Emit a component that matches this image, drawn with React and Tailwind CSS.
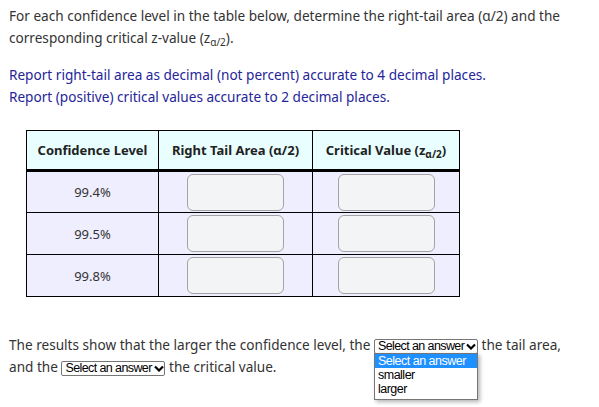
import React from 'react';

const rows = ['99.4%', '99.5%', '99.8%'];

function Chevron() {
    return (
        <svg width="10" height="7" viewBox="0 0 10 7" className="ml-[2px] shrink-0">
            <polyline points="1,1.5 5,5.5 9,1.5" fill="none" stroke="#000" strokeWidth="2.2" />
        </svg>
    );
}

function FakeSelect({ open }) {
    return (
        <span className="relative inline-flex align-middle">
            <span className="flex h-[15px] w-[104px] items-center whitespace-nowrap rounded-[2px] border border-[#767676] bg-white pl-[3px] font-['Liberation_Sans',Arial,sans-serif] text-[12.5px] leading-none tracking-[-0.6px] text-black">
                Select an answer
                <Chevron />
            </span>
            {open && (
                <span className="absolute left-0 top-[14px] z-10 block w-[104px] whitespace-nowrap border border-[#767676] bg-white pb-[3px] font-['Liberation_Sans',Arial,sans-serif] text-[12.5px] leading-[14px] tracking-[-0.5px] text-black shadow-[2px_2px_4px_rgba(0,0,0,0.3)]">
                    <span className="block bg-[#1e90ff] px-[3px] text-white">Select an answer</span>
                    <span className="block px-[3px]">smaller</span>
                    <span className="block px-[3px]">larger</span>
                </span>
            )}
        </span>
    );
}

export default function App() {
    return (
        <div className="min-h-[407px] bg-white pl-[9px] pt-[5px] font-['Noto_Sans',sans-serif] text-[13.6px] leading-[22px] text-[#333]">
            <p>
                For each confidence level in the table below, determine the right-tail area (α/2) and the
                <br />
                corresponding critical z-value (z<sub className="text-[10px]">α/2</sub>).
            </p>

            <p className="mt-[15px] text-[#25259a]">
                Report right-tail area as decimal (not percent) accurate to 4 decimal places.
                <br />
                Report (positive) critical values accurate to 2 decimal places.
            </p>

            <table className="ml-[17px] mt-[22px] border-collapse text-center">
                <thead>
                    <tr className="h-[40px] bg-[#e9ffff]">
                        <th className="w-[132px] border border-b-[3px] border-black px-1 text-[13px] font-bold text-[#222]">
                            Confidence Level
                        </th>
                        <th className="w-[154px] border border-b-[3px] border-black px-1 text-[13px] font-bold text-[#222]">
                            Right Tail Area (α/2)
                        </th>
                        <th className="w-[147px] border border-b-[3px] border-black px-1 text-[13px] font-bold text-[#222]">
                            Critical Value (z<sub className="text-[10px]">α/2</sub>)
                        </th>
                    </tr>
                </thead>
                <tbody>
                    {rows.map((r) => (
                        <tr key={r} className="h-[42px] bg-[#efeefe]">
                            <td className="border border-black text-[13px] text-[#333]">{r}</td>
                            <td className="border border-black">
                                <div className="mx-auto h-[37px] w-[97px] rounded-[6px] border border-[#a3a3a3] bg-[#f3f4f6]" />
                            </td>
                            <td className="border border-black">
                                <div className="mx-auto h-[37px] w-[97px] rounded-[6px] border border-[#a3a3a3] bg-[#f3f4f6]" />
                            </td>
                        </tr>
                    ))}
                </tbody>
            </table>

            <p className="mt-[37px]">
                The results show that the larger the confidence level, the <FakeSelect open /> the tail area,
                <br />
                and the <FakeSelect /> the critical value.
            </p>
        </div>
    );
}
